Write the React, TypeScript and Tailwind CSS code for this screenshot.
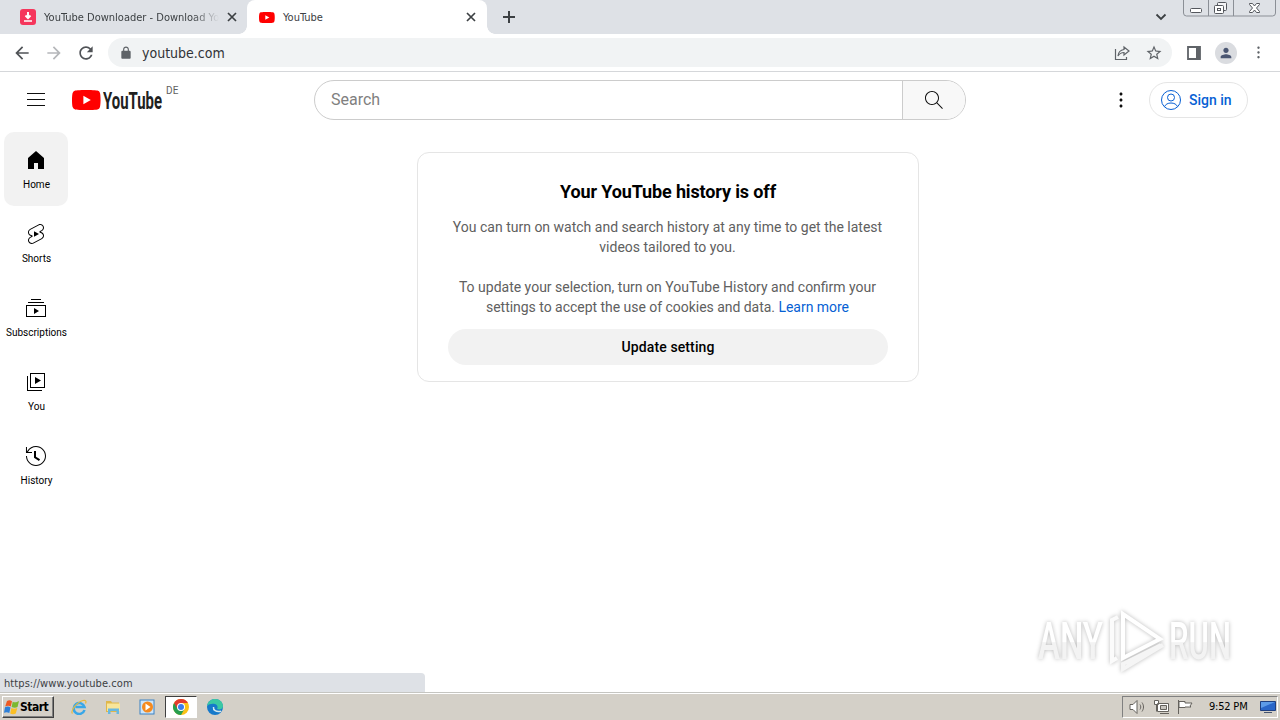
import type { ReactNode } from "react";
import clsx from "clsx";

const ICONS = {
  menu: "M21 6H3V5h18v1zm0 5H3v1h18v-1zm0 6H3v1h18v-1z",
  search:
    "m20.87 20.17-5.59-5.59C16.35 13.35 17 11.75 17 10c0-3.87-3.13-7-7-7s-7 3.13-7 7 3.13 7 7 7c1.75 0 3.35-.65 4.58-1.71l5.59 5.59.7-.71zM10 16c-3.31 0-6-2.69-6-6s2.69-6 6-6 6 2.69 6 6-2.69 6-6 6z",
  dots: "M12 16.5c.83 0 1.5.67 1.5 1.5s-.67 1.5-1.5 1.5-1.5-.67-1.5-1.5.67-1.5 1.5-1.5zM10.5 12c0 .83.67 1.5 1.5 1.5s1.5-.67 1.5-1.5-.67-1.5-1.5-1.5-1.5.67-1.5 1.5zm0-6c0 .83.67 1.5 1.5 1.5s1.5-.67 1.5-1.5-.67-1.5-1.5-1.5-1.5.67-1.5 1.5z",
  home: "M4 21V10.08l8-6.96 8 6.96V21h-6v-6h-4v6H4z",
  shorts:
    "M10 14.65v-5.3L15 12l-5 2.65zm7.77-4.33-1.2-.5L18 9.06c1.84-.96 2.53-3.23 1.56-5.06s-3.24-2.53-5.07-1.56L6 6.94c-1.29.68-2.07 2.04-2 3.49.07 1.42.93 2.67 2.22 3.25.03.01 1.2.5 1.2.5L6 14.93c-1.83.97-2.53 3.24-1.56 5.07.97 1.83 3.24 2.53 5.07 1.56l8.5-4.5c1.29-.68 2.06-2.04 1.99-3.49-.07-1.42-.94-2.68-2.23-3.25zm-.23 5.86-8.5 4.5c-1.34.71-3.01.2-3.72-1.14-.71-1.34-.2-3.01 1.14-3.72l2.04-1.08v-1.21l-.69-.28-1.11-.46c-.99-.41-1.65-1.35-1.7-2.41-.05-1.06.52-2.06 1.46-2.56l8.5-4.5c1.34-.71 3.01-.2 3.72 1.14.71 1.34.2 3.01-1.14 3.72L15.5 9.26v1.21l1.8.74c.99.41 1.65 1.35 1.7 2.41.05 1.06-.52 2.06-1.46 2.56z",
  subscriptions:
    "M10 18v-6l5 3-5 3zm7-15H7v1h10V3zm3 3H4v1h16V6zm2 3H2v12h20V9zM3 10h18v10H3V10z",
  you: "m11 7 6 3.5-6 3.5V7zm7 13H4V6H3v15h15v-1zm3-2H6V3h15v15zM7 17h13V4H7v13z",
  history:
    "M14.97 16.95 10 13.87V7h2v5.76l4.03 2.49-1.06 1.7zM22 12c0 5.51-4.49 10-10 10S2 17.51 2 12h1c0 4.96 4.04 9 9 9s9-4.04 9-9-4.04-9-9-9C8.81 3 5.92 4.64 4.28 7.38c-.11.18-.22.37-.31.56L3.94 8H8v1H1.96V3h1v4.74c.04-.09.07-.17.11-.25.11-.22.23-.42.35-.63C5.22 3.86 8.51 2 12 2c5.51 0 10 4.49 10 10z",
  back: "M20 11H7.83l5.59-5.59L12 4l-8 8 8 8 1.41-1.41L7.83 13H20v-2z",
  forward: "M12 4l-1.41 1.41L16.17 11H4v2h12.17l-5.58 5.59L12 20l8-8z",
  reload:
    "M17.65 6.35C16.2 4.9 14.21 4 12 4c-4.42 0-7.99 3.58-7.99 8s3.57 8 7.99 8c3.73 0 6.84-2.55 7.73-6h-2.08c-.82 2.33-3.04 4-5.65 4-3.31 0-6-2.69-6-6s2.69-6 6-6c1.66 0 3.14.69 4.22 1.78L13 11h7V4l-2.35 2.35z",
  lock: "M18 8h-1V6c0-2.76-2.24-5-5-5S7 3.24 7 6v2H6c-1.1 0-2 .9-2 2v10c0 1.1.9 2 2 2h12c1.1 0 2-.9 2-2V10c0-1.1-.9-2-2-2zM9 6c0-1.66 1.34-3 3-3s3 1.34 3 3v2H9V6z",
  star: "M22 9.24l-7.19-.62L12 2 9.19 8.63 2 9.24l5.46 4.73L5.82 21 12 17.27 18.18 21l-1.63-7.03L22 9.24zM12 15.4l-3.76 2.27 1-4.28-3.32-2.88 4.38-.38L12 6.1l1.71 4.04 4.38.38-3.32 2.88 1 4.28L12 15.4z",
  person:
    "M12 12c2.21 0 4-1.79 4-4s-1.79-4-4-4-4 1.79-4 4 1.79 4 4 4zm0 2c-2.67 0-8 1.34-8 4v2h16v-2c0-2.66-5.33-4-8-4z",
};

function Icon({ name, className = "size-6" }: { name: keyof typeof ICONS; className?: string }) {
  return (
    <svg viewBox="0 0 24 24" fill="currentColor" className={clsx("shrink-0", className)}>
      <path d={ICONS[name]} />
    </svg>
  );
}

function PlayBadge({ className }: { className: string }) {
  return (
    <svg viewBox="0 0 29 20" className={clsx("shrink-0", className)}>
      <path
        d="M28 3.1A3.6 3.6 0 0 0 25.4.6C23.2 0 14.3 0 14.3 0S5.4 0 3.1.6A3.6 3.6 0 0 0 .6 3.1C0 5.4 0 10 0 10s0 4.6.6 6.9a3.6 3.6 0 0 0 2.5 2.5c2.3.6 11.2.6 11.2.6s8.9 0 11.1-.6a3.6 3.6 0 0 0 2.6-2.5c.6-2.3.6-6.9.6-6.9s0-4.6-.6-6.9z"
        fill="#f00"
      />
      <path d="M11.4 14.3 18.8 10l-7.4-4.3z" fill="#fff" />
    </svg>
  );
}

function CloseX() {
  return (
    <svg viewBox="0 0 10 10" className="size-[10px] shrink-0" stroke="#3c4043" strokeWidth="1.7">
      <path d="M1 1l8 8M9 1L1 9" />
    </svg>
  );
}

function TabStrip() {
  return (
    <div className="flex h-[34px] bg-[#dee1e6] font-['DejaVu_Sans_Condensed','DejaVu_Sans',sans-serif] text-[11px] text-[#3c4043]">
      <div className="flex w-[247px] items-center pl-5">
        <svg viewBox="0 0 16 16" className="size-4 shrink-0">
          <rect width="16" height="16" rx="3" fill="#f5365c" />
          <path d="M8 3v6M5.5 6.5 8 9.2l2.5-2.7" stroke="#fff" strokeWidth="1.9" fill="none" />
          <path d="M4 12h8" stroke="#fff" strokeWidth="1.5" />
        </svg>
        <div className="ml-2 w-[175px] overflow-hidden pt-[2px] whitespace-nowrap [mask-image:linear-gradient(to_right,black_148px,transparent)]">
          YouTube Downloader - Download You
        </div>
        <div className="ml-2">
          <CloseX />
        </div>
      </div>
      <div className="relative flex w-[240px] items-center rounded-t-lg bg-white pl-3">
        {/* flared bottom corners of the active tab */}
        <div className="absolute bottom-0 -left-2 size-2 bg-[radial-gradient(circle_at_0_0,transparent_7.5px,white_8px)]" />
        <div className="absolute -right-2 bottom-0 size-2 bg-[radial-gradient(circle_at_100%_0,transparent_7.5px,white_8px)]" />
        <PlayBadge className="h-[11px] w-4" />
        <span className="ml-2 flex-1 pt-[2px]">YouTube</span>
        <div className="mr-[11px]">
          <CloseX />
        </div>
      </div>
      <svg viewBox="0 0 12 12" className="mt-[11px] ml-4 size-3" stroke="#3c4043" strokeWidth="2">
        <path d="M6 0v12M0 6h12" />
      </svg>
      <svg viewBox="0 0 12 8" className="mt-[13px] mr-4 ml-auto h-2 w-3" fill="none" stroke="#3c4043" strokeWidth="1.8">
        <path d="M1.5 1.5 6 6l4.5-4.5" />
      </svg>
      <WindowButtons />
    </div>
  );
}

function WindowButtons() {
  return (
    <svg viewBox="0 0 93 17" className="mr-1 h-[17px] w-[93px]" fill="none" stroke="#8b8f96">
      <path d="M.5 0v13a3 3 0 0 0 3 3h86a3 3 0 0 0 3-3V0M25.5 0v16M50.5 0v16" />
      <g stroke="#54575d">
        <rect x="7.5" y="8.5" width="11" height="4" rx="1" fill="#fff" />
        <rect x="34.5" y="2.5" width="9" height="8" rx="1" fill="#f4f4f6" />
        <rect x="31.5" y="5.5" width="9" height="8" rx="1" fill="#fff" />
        <rect x="34.5" y="8.5" width="3" height="2" />
        <path
          d="M66.5 3.5h3l2 2.5 2-2.5h3v1L73.5 8l3 3.5v1h-3l-2-2.5-2 2.5h-3v-1L69.5 8l-3-3.5z"
          fill="#fff"
        />
      </g>
    </svg>
  );
}

function Toolbar() {
  return (
    <div className="flex h-[38px] items-center border-b border-[#d5d7da] bg-white pl-3 text-[#5f6368]">
      <Icon name="back" className="size-5 text-[#505357]" />
      <Icon name="forward" className="ml-3 size-5 text-[#b5b7ba]" />
      <Icon name="reload" className="ml-3 size-5 text-[#505357]" />
      <div className="ml-3 flex h-[29px] w-[1064px] items-center rounded-full bg-[#f1f3f4] pr-[9px] pl-[11px]">
        <Icon name="lock" className="size-[14px]" />
        <span className="ml-[9px] flex-1 pt-px font-['DejaVu_Sans_Condensed','DejaVu_Sans',sans-serif] text-[14px] text-[#303236]">
          youtube.com
        </span>
        <svg viewBox="0 0 16 16" className="mr-[15px] size-4" fill="none" stroke="#5f6368" strokeWidth="1.2">
          <path d="M1.5 4v10.5h11V12M10 2l5 4-5 4V7.5C7 7.5 5.5 8.5 4 11c.3-3.5 2.5-6 6-6.5z" />
        </svg>
        <Icon name="star" className="size-[18px]" />
      </div>
      <svg viewBox="0 0 14 14" className="ml-[15px] size-[14px]">
        <path d="M1 1h12v12H1z" fill="none" stroke="#5f6368" strokeWidth="1.8" />
        <path d="M9 1h4v12H9z" fill="#5f6368" />
      </svg>
      <div className="ml-[14px] flex size-[22px] items-center justify-center rounded-full bg-[#dadce0]">
        <Icon name="person" className="size-4 text-[#4a5672]" />
      </div>
      <Icon name="dots" className="ml-3 size-[19px]" />
    </div>
  );
}

function Masthead() {
  return (
    <header className="flex h-14 items-center pl-6">
      <Icon name="menu" />
      <div className="ml-6 flex w-[242px] items-center">
        <PlayBadge className="h-5 w-[29px]" />
        <svg viewBox="0 0 60 28" className="ml-[2px] h-7 w-[60px]">
          <text
            x="0"
            y="22.5"
            textLength="59"
            lengthAdjust="spacingAndGlyphs"
            className="fill-[#212121] font-[Roboto,sans-serif] text-[24px] font-bold"
          >
            YouTube
          </text>
        </svg>
        <span className="mb-[19px] ml-[3px] text-[10px] leading-3 tracking-[0.3px] text-[#606060]">DE</span>
      </div>
      <div className="flex h-10 w-[652px] overflow-hidden rounded-full border border-[#ccc]">
        <div className="flex flex-1 items-center pl-4 text-base text-[#808080]">Search</div>
        <div className="flex w-[63px] items-center justify-center border-l border-[#ccc] bg-[#f8f8f8]">
          <Icon name="search" />
        </div>
      </div>
      <Icon name="dots" className="ml-[143px] size-6" />
      <button className="ml-4 flex h-9 w-[99px] items-center rounded-full border border-[#e5e5e5] pl-[9px] text-sm font-medium text-[#065fd4]">
        <svg viewBox="0 0 24 24" className="mr-[6px] size-6" fill="none" stroke="#065fd4">
          <circle cx="12" cy="12" r="9.5" />
          <circle cx="12" cy="9.5" r="3.5" />
          <path d="M5.5 18.7C6.4 16.3 8.9 15 12 15s5.6 1.3 6.5 3.7" />
        </svg>
        Sign in
      </button>
    </header>
  );
}

const NAV: { icon: keyof typeof ICONS; label: string }[] = [
  { icon: "home", label: "Home" },
  { icon: "shorts", label: "Shorts" },
  { icon: "subscriptions", label: "Subscriptions" },
  { icon: "you", label: "You" },
  { icon: "history", label: "History" },
];

function MiniGuide() {
  return (
    <nav className="mt-1 ml-1 w-16 shrink-0 text-black">
      {NAV.map((item, i) => (
        <a
          key={item.label}
          className={clsx("flex h-[74px] flex-col items-center rounded-[10px] pt-4", i === 0 && "bg-[#f2f2f2]")}
        >
          <Icon name={item.icon} />
          <span className="mt-[6px] ml-px text-[10px] leading-[14px] whitespace-nowrap">{item.label}</span>
        </a>
      ))}
    </nav>
  );
}

function HistoryCard() {
  return (
    <section className="mt-6 ml-[349px] h-[230px] w-[502px] rounded-xl border border-[#e5e5e5] px-[30px] pt-[26px] text-center">
      <h1 className="text-[18px] leading-[26px] font-bold tracking-[-0.13px] text-black">Your YouTube history is off</h1>
      <p className="mt-3 pr-px text-sm leading-5 whitespace-nowrap text-[#606060]">
        You can turn on watch and search history at any time to get the latest
        <br />
        videos tailored to you.
        <br />
        <br />
        To update your selection, turn on YouTube History and confirm your
        <br />
        <span className="tracking-[-0.03px]">
          settings to accept the use of cookies and data. <a className="text-[#065fd4]">Learn more</a>
        </span>
      </p>
      <button className="mt-3 h-9 w-full rounded-full bg-[#f2f2f2] text-sm font-medium tracking-[0.12px] text-black">
        Update setting
      </button>
    </section>
  );
}

function Watermark() {
  return (
    <svg
      viewBox="0 0 210 76"
      className="absolute top-[603px] left-[1030px] h-[76px] w-[210px] drop-shadow-[0_0_2px_rgba(0,0,0,0.28)]"
    >
      <defs>
        <linearGradient id="fade" x1="0" y1="0" x2="0" y2="1">
          <stop offset="0.5" stopColor="#fff" />
          <stop offset="0.52" stopColor="#f3f3f3" />
        </linearGradient>
      </defs>
      <g className="font-[Roboto,sans-serif] text-[51px] font-medium" fill="url(#fade)">
        <text x="8" y="56" textLength="65" lengthAdjust="spacingAndGlyphs">
          ANY
        </text>
        <text x="139" y="56" textLength="62" lengthAdjust="spacingAndGlyphs">
          RUN
        </text>
      </g>
      <g fill="none" strokeWidth="4">
        <path d="M93 11v44l37-19L93 11z" stroke="#fff" />
        <path d="M88 14l-6 3v41l5-3" stroke="#fbfbfb" />
        <path d="M131 42 93 61v5l40-24" stroke="#f5f5f5" />
      </g>
    </svg>
  );
}

function TaskIcon({ children, active }: { children: ReactNode; active?: boolean }) {
  return (
    <div
      className={clsx(
        "flex h-[22px] w-8 items-center justify-center",
        active && "border border-t-[#404040] border-r-white border-b-white border-l-[#404040] bg-white",
      )}
    >
      <svg viewBox="0 0 16 16" className="size-4">
        {children}
      </svg>
    </div>
  );
}

function Taskbar() {
  return (
    <footer className="flex h-[27px] items-center border-t border-white bg-[#d4d0c8] pl-[2px] shadow-[0_-1px_0_#c5c5c1]">
      <button className="flex h-[22px] w-[52px] items-center border border-t-white border-r-[#404040] border-b-[#404040] border-l-white pl-[1px] font-['DejaVu_Sans_Condensed','DejaVu_Sans',sans-serif] text-[12px] font-bold tracking-[-0.5px] text-black shadow-[inset_-1px_-1px_0_#808080]">
        <svg viewBox="0 0 16 16" className="size-4 shrink-0">
          <path d="M3 2c2-1.2 3.5-.8 5 .2L6.8 7.6C5.3 6.5 3.5 6.4 1.2 7.4z" fill="#ee5a24" />
          <path d="M8.7 2.7c2 1 3.8.8 6.3-.7l-1.5 6c-1.8 1-3.9.9-5.9-.1z" fill="#7cb82f" />
          <path d="M1 8.3c2-1 4-.9 5.5.2L5.3 14c-1.6-1-3.6-1.1-5.3-.2z" fill="#2f80d8" />
          <path d="M7.4 9c1.8 1 3.8.9 5.9 0l-1.5 5.5c-1.7 1-3.8 1-5.6.1z" fill="#fbbf24" />
        </svg>
        Start
      </button>
      <div className="ml-[9px] flex gap-[2px]">
        <TaskIcon>
          <path d="M13.5 11A5.5 5.5 0 1 1 13.5 8H4.5" fill="none" stroke="#39a7e8" strokeWidth="2.5" />
          <path d="M1.5 14.5C-1 12 6 3 12 1.5c3-.6 3.5 1 2.5 3" fill="none" stroke="#e8b93c" strokeWidth="1.2" />
        </TaskIcon>
        <TaskIcon>
          <path d="M1 2h5l1 1.5h7V13H1z" fill="#dfb74b" />
          <path d="M2 4.5h13V12H2z" fill="#f8e59a" />
          <path d="M3 15V9.5h11V15h-2.5v-3h-6v3z" fill="#69b8e0" />
        </TaskIcon>
        <TaskIcon>
          <rect x="1" y="1" width="14" height="14" fill="#cde5fa" stroke="#3b82c4" />
          <circle cx="8.5" cy="8" r="5.5" fill="#f58a1f" />
          <path d="M6.5 4.5v7l5-3.5z" fill="#fff" />
        </TaskIcon>
        <TaskIcon active>
          <circle cx="8" cy="8" r="8" fill="#fbc116" />
          <path d="M8 8 1.07 4A8 8 0 0 0 8 16l3.5-6z" fill="#269e4f" />
          <path d="M8 4h6.93A8 8 0 0 0 1.07 4L4.54 10z" fill="#e33b2e" />
          <circle cx="8" cy="8" r="4" fill="#fff" />
          <circle cx="8" cy="8" r="3" fill="#3b7ded" />
        </TaskIcon>
        <TaskIcon>
          <circle cx="8" cy="8" r="8" fill="#1679ca" />
          <path d="M0 7C1 2 4.5 0 8 0c5 0 8 3.5 8 7 0 3-3 4-6 3 1-1 1-4-2-5-3-.8-6 0-8 2z" fill="#3bc8a3" />
          <path d="M6.5 8c-.5 3 2.5 5.5 7.5 4.2" fill="none" stroke="#d4e8ee" strokeWidth="1.5" />
        </TaskIcon>
      </div>
      <Tray />
    </footer>
  );
}

function Tray() {
  return (
    <div className="mr-[2px] ml-auto flex h-[22px] w-[156px] items-center border border-t-[#808080] border-r-white border-b-white border-l-[#808080] pl-[6px]">
      <svg viewBox="0 0 66 16" className="h-4 w-[66px] shrink-0" fill="#fff" stroke="#65625d">
        <path d="M1 5.5h3l4-4v13l-4-4H1zM11 5.5c1 1.5 1 3.5 0 5" />
        <path d="M13 3.5c2 3 2 6 0 9" fill="none" />
        <path d="M28.5 4.5h11v8h-11zM31 14.5h9M25.5 1.5h4v4h-4zM27.5 5.5v7" />
        <path d="M31.5 6.5h6v4h-6z" fill="#c8c5bf" />
        <path d="M49.5 1v14M50 2.5h6V4h7l-2 3 1 1h-6v.5h-6z" />
      </svg>
      <span className="ml-[14px] pt-px font-['DejaVu_Sans_Condensed','DejaVu_Sans',sans-serif] text-[11px] tracking-[-0.2px] whitespace-nowrap text-black">
        9:52 PM
      </span>
      <svg viewBox="0 0 16 14" className="mr-[1px] ml-auto h-[14px] w-4">
        <path d="M.5 1.5h15v9H.5z" fill="#2a66c8" stroke="#1f3f80" />
        <path d="M1 2h14L1 8z" fill="#5d9be8" />
        <path d="M4 12.5h8" stroke="#44536e" />
      </svg>
    </div>
  );
}

export default function App() {
  return (
    <div className="relative flex h-[720px] w-[1280px] flex-col overflow-hidden bg-white font-[Roboto,sans-serif] text-[#0f0f0f]">
      <TabStrip />
      <Toolbar />
      <Masthead />
      <div className="flex flex-1">
        <MiniGuide />
        <HistoryCard />
      </div>
      <div className="absolute bottom-7 left-0 flex h-[19px] w-[425px] items-center rounded-tr-[4px] bg-[#dee1e6] pt-[3px] pl-1 font-['DejaVu_Sans_Condensed','DejaVu_Sans',sans-serif] text-[11px] tracking-[0.08px] text-[#3c4043]">
        https://www.youtube.com
      </div>
      <Watermark />
      <Taskbar />
    </div>
  );
}
